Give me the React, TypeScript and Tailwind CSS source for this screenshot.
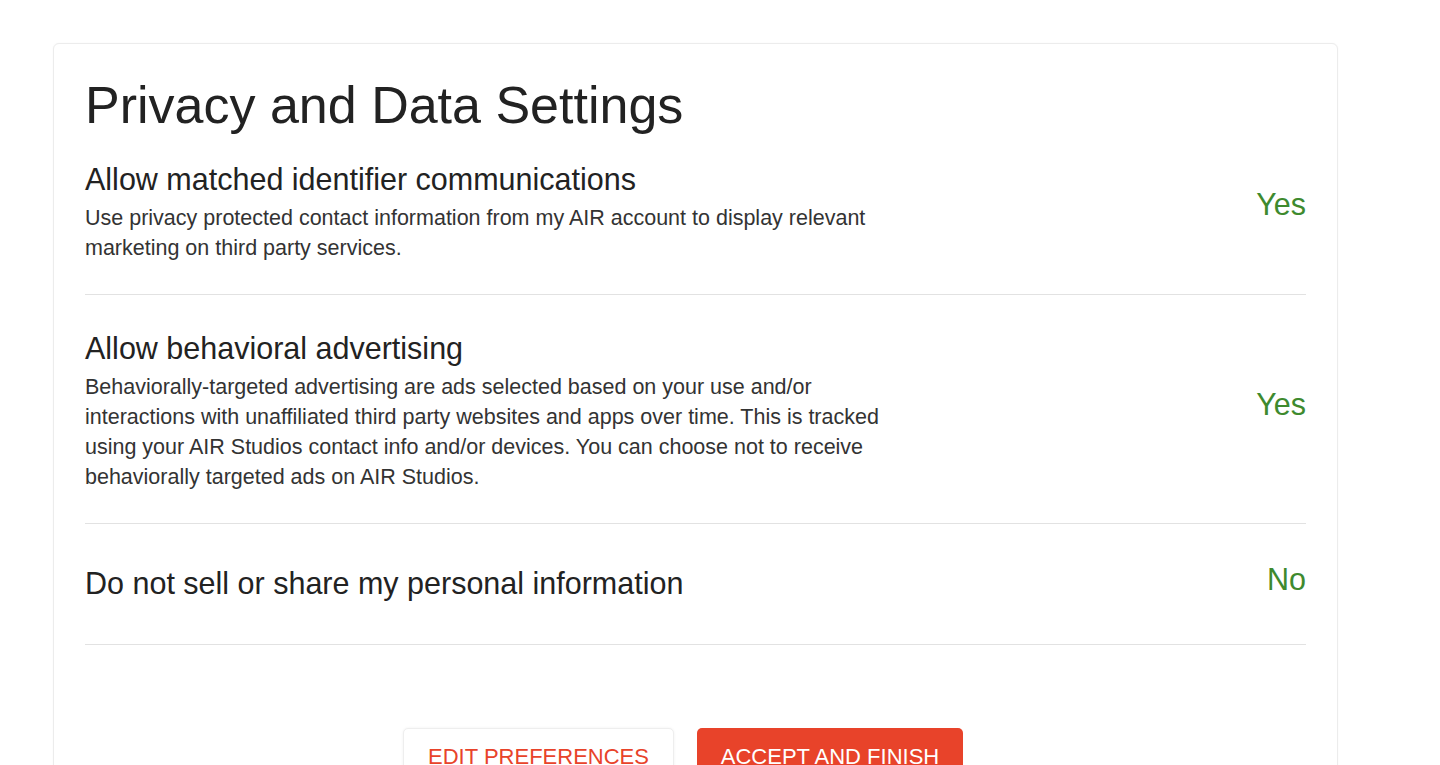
import React from "react";

const rows = [
  {
    title: "Allow matched identifier communications",
    desc: "Use privacy protected contact information from my AIR account to display relevant marketing on third party services.",
    value: "Yes",
    pad: "pt-[25px] pb-[31px]",
    off: "mb-[17px]",
  },
  {
    title: "Allow behavioral advertising",
    desc: "Behaviorally-targeted advertising are ads selected based on your use and/or interactions with unaffiliated third party websites and apps over time. This is tracked using your AIR Studios contact info and/or devices. You can choose not to receive behaviorally targeted ads on AIR Studios.",
    value: "Yes",
    pad: "pt-[35px] pb-[31px]",
    off: "mb-[15px]",
  },
  {
    title: "Do not sell or share my personal information",
    desc: "",
    value: "No",
    pad: "pt-[37px] pb-[39px]",
    off: "mb-[8px]",
  },
];

export default function App() {
  return (
    <div
      className="min-h-[765px] bg-white pl-[53px] pt-[43px] w-[1440px] overflow-hidden"
      style={{ fontFamily: '"Liberation Sans", Arial, sans-serif' }}
    >
      <div className="w-[1285px] rounded-[6px] border border-[#ececec] bg-white px-[31px] pt-[30px] pb-[40px] shadow-[0_0_2px_rgba(0,0,0,0.04)]">
        <h1 className="text-[52px] leading-[62px] text-[#222]">Privacy and Data Settings</h1>
        <div>
          {rows.map((r, i) => (
            <div key={i} className={`flex items-center justify-between border-b border-[#e2e2e2] ${r.pad}`}>
              <div className="max-w-[820px]">
                <div className="text-[30.5px] leading-[36px] text-[#222]">{r.title}</div>
                {r.desc && (
                  <p className="mt-[6px] text-[21.5px] leading-[30px] text-[#333]">{r.desc}</p>
                )}
              </div>
              <div className={`text-[30.5px] leading-[36px] text-[#3e8a2e] ${r.off}`}>{r.value}</div>
            </div>
          ))}
        </div>
        <div className="flex justify-center gap-[23px] pt-[83px] pr-[25px]">
          <button className="h-[58px] w-[271px] rounded-[5px] border border-[#eeeeee] bg-white text-[22px] leading-[26px] text-[#e8432a] shadow-[0_0_3px_rgba(0,0,0,0.06)]">
            EDIT PREFERENCES
          </button>
          <button className="h-[58px] w-[266px] rounded-[5px] bg-[#e8432a] text-[22px] leading-[26px] text-white">
            ACCEPT AND FINISH
          </button>
        </div>
      </div>
    </div>
  );
}
